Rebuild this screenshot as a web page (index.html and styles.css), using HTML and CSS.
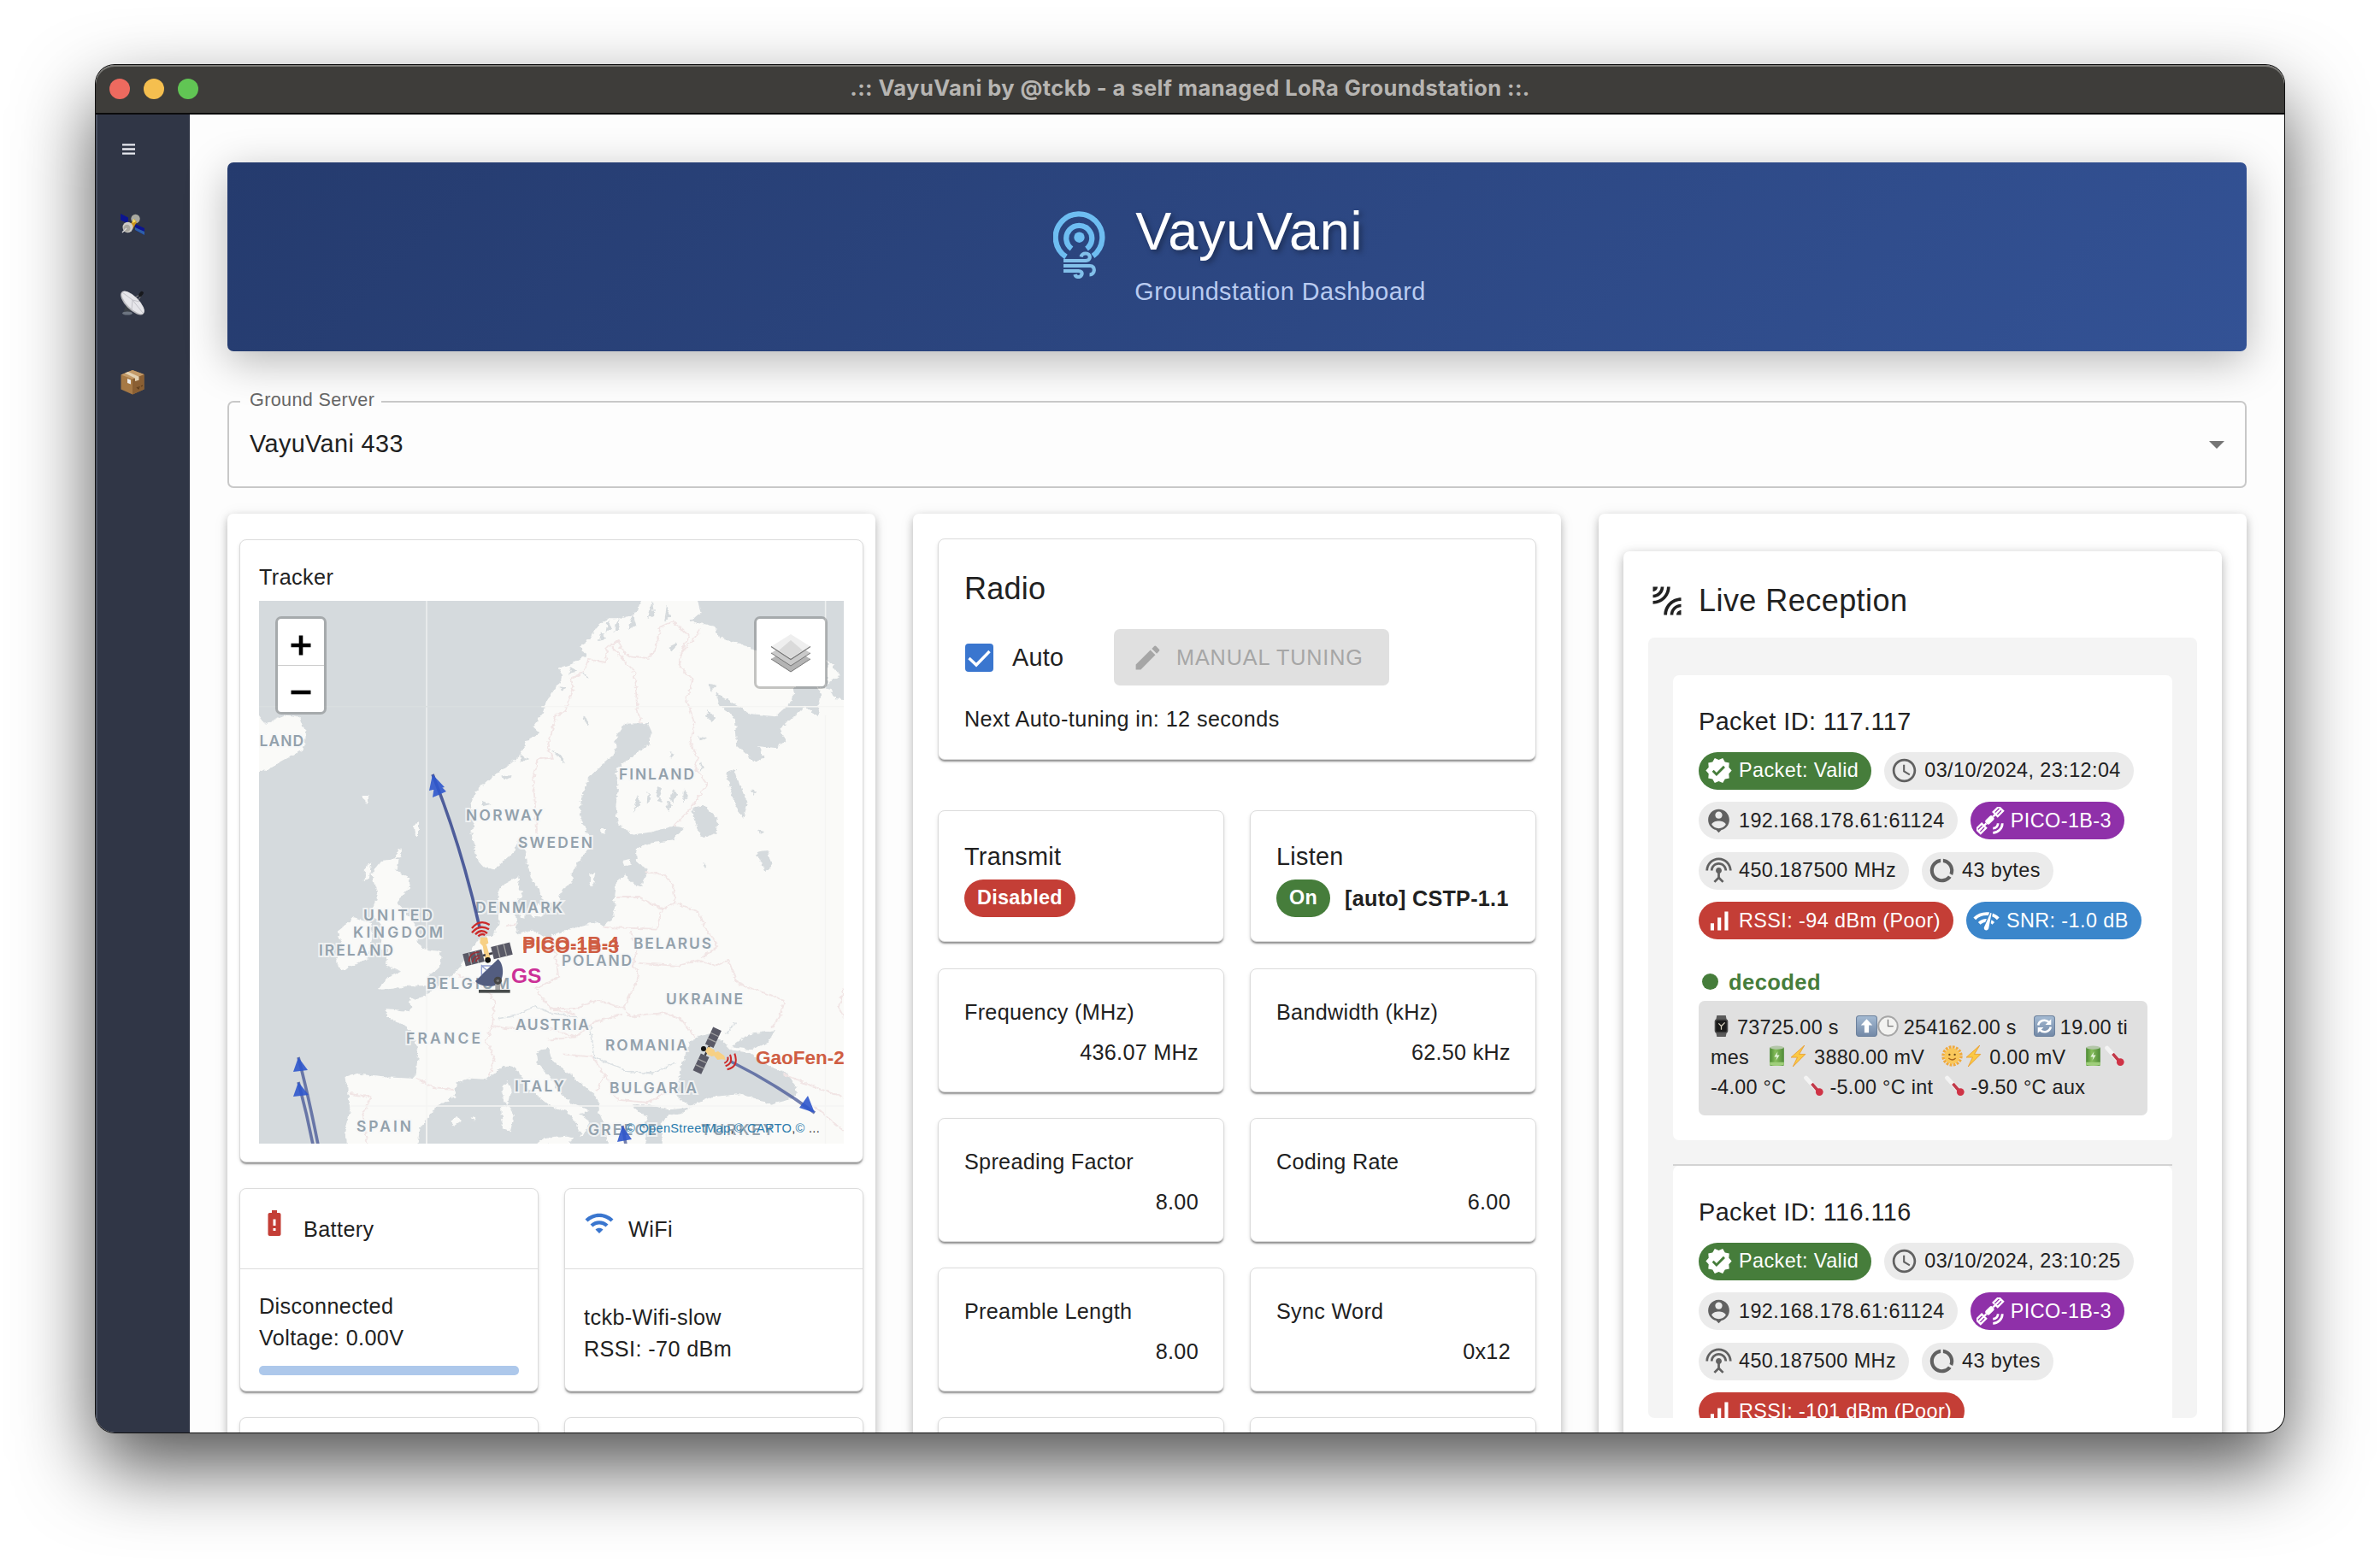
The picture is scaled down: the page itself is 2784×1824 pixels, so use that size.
FILE: index.html
```html
<!DOCTYPE html>
<html lang="en">
<head>
<meta charset="utf-8">
<title>VayuVani Groundstation Dashboard</title>
<link rel="stylesheet" href="styles.css">
</head>
<body>
<svg class="defs" width="0" height="0" aria-hidden="true">
  <symbol id="i-verified" viewBox="0 0 24 24"><path d="m23 12-2.44-2.79.34-3.69-3.61-.82-1.89-3.2L12 2.96 8.6 1.5 6.71 4.69 3.1 5.5l.34 3.7L1 12l2.44 2.79-.34 3.7 3.61.82L8.6 22.5l3.4-1.47 3.4 1.46 1.89-3.19 3.61-.82-.34-3.69zm-12.91 4.72-3.8-3.81 1.48-1.48 2.32 2.33 5.85-5.87 1.48 1.48z"/></symbol>
  <symbol id="i-clock" viewBox="0 0 24 24"><path d="M11.99 2C6.47 2 2 6.48 2 12s4.47 10 9.99 10C17.52 22 22 17.52 22 12S17.52 2 11.99 2M12 20c-4.42 0-8-3.58-8-8s3.58-8 8-8 8 3.58 8 8-3.58 8-8 8m.5-13H11v6l5.25 3.15.75-1.23-4.5-2.67z"/></symbol>
  <symbol id="i-person" viewBox="0 0 24 24"><path d="M12 2c-4.97 0-9 4.03-9 9 0 4.17 2.84 7.67 6.69 8.69L12 22l2.31-2.31C18.16 18.67 21 15.17 21 11c0-4.97-4.03-9-9-9m0 2c1.66 0 3 1.34 3 3s-1.34 3-3 3-3-1.34-3-3 1.34-3 3-3m0 14.3c-2.5 0-4.71-1.28-6-3.22.03-1.99 4-3.08 6-3.08s5.97 1.09 6 3.08c-1.29 1.94-3.5 3.22-6 3.22"/></symbol>
  <symbol id="i-sat" viewBox="0 0 24 24"><g transform="rotate(45 11 11)"><rect x="9" y="7" width="4.6" height="8" rx="1.5"/><g fill="none" stroke="currentColor" stroke-width="1.7"><path d="M11.3 7V4.5M11.3 17.5V15M8.7-2.500h5.200v6.500H8.700zM8.700 18h5.200v6.500H8.700zM11.300-2v6M11.300 18v6"/></g></g><g fill="none" stroke="currentColor" stroke-width="2"><path d="M14 18.300a4.300 4.300 0 0 0 4.300-4.300M14 22a8 8 0 0 0 8-8"/></g></symbol>
  <symbol id="i-antenna" viewBox="0 0 24 24"><path d="M12 5c-3.87 0-7 3.13-7 7h2c0-2.76 2.24-5 5-5s5 2.24 5 5h2c0-3.87-3.13-7-7-7m1 9.290c.88-.39 1.500-1.260 1.500-2.290 0-1.380-1.120-2.500-2.500-2.500S9.500 10.620 9.500 12c0 1.020.62 1.900 1.500 2.290v3.300L7.590 21 9 22.410l3-3 3 3L16.410 21 13 17.590zM12 1C5.930 1 1 5.930 1 12h2c0-4.970 4.030-9 9-9s9 4.030 9 9h2c0-6.070-4.930-11-11-11"/></symbol>
  <symbol id="i-usage" viewBox="0 0 24 24"><path d="M13 2.050v3.030c3.390.49 6 3.390 6 6.920 0 .9-.18 1.750-.48 2.540l2.600 1.530c.56-1.240.88-2.620.88-4.070 0-5.180-3.950-9.450-9-9.950M12 19c-3.870 0-7-3.130-7-7 0-3.530 2.610-6.430 6-6.920V2.050c-5.060.5-9 4.760-9 9.950 0 5.520 4.470 10 9.990 10 3.310 0 6.240-1.610 8.060-4.090l-2.600-1.530C16.170 17.980 14.210 19 12 19"/></symbol>
  <symbol id="i-signal" viewBox="0 0 24 24"><path d="M17 4h3v16h-3zM5 14h3v6H5zm6-5h3v11h-3z"/></symbol>
  <symbol id="i-netcheck" viewBox="0 0 24 24"><path d="M15.900 5c-.17 0-.32.09-.41.23l-.07.15-5.180 11.650c-.16.29-.26.61-.26.96 0 1.110.9 2.010 2.010 2.010.96 0 1.770-.68 1.960-1.590l.01-.03L16.400 5.500c0-.28-.22-.5-.5-.5M1 9l2 2c2.880-2.880 6.790-4.080 10.530-3.620l1.190-2.680C9.890 3.840 4.740 5.270 1 9m20 2 2-2c-1.640-1.640-3.550-2.820-5.590-3.570l-.53 2.820c1.500.62 2.900 1.530 4.120 2.750m-4 4 2-2c-.8-.8-1.700-1.420-2.660-1.890l-.55 2.920c.42.27.83.59 1.210.97M5 13l2 2c1.130-1.130 2.560-1.790 4.030-2l1.280-2.880c-2.630-.08-5.300.87-7.310 2.880"/></symbol>

  <linearGradient id="g-key" x1="0" y1="0" x2="0" y2="1"><stop offset="0" stop-color="#a5bbd3"/><stop offset="1" stop-color="#7288a6"/></linearGradient>
  <linearGradient id="g-bat" x1="0" x2="1" y1="0" y2="0"><stop offset="0" stop-color="#4b8a32"/><stop offset=".4" stop-color="#86bd5c"/><stop offset="1" stop-color="#4f8a37"/></linearGradient>
  <symbol id="e-watch" viewBox="0 0 24 24"><path d="M7 0h10l1 5H6zM6 19h12l-1 5H7z" fill="#5b5b5b"/><rect x="4.500" y="4" width="15" height="16" rx="3" fill="#4a4a4a"/><rect x="6" y="5.500" width="12" height="13" rx="1.500" fill="#1b1b1b"/><path d="M9 9l3 3 4-4M12 12v4" stroke="#d8d2c0" stroke-width="1.200" fill="none"/></symbol>
  <symbol id="e-up" viewBox="0 0 24 24"><rect x=".5" y=".5" width="23" height="23" rx="3" fill="url(#g-key)" stroke="#6c819d"/><path d="M12 4l6.500 7H14.500v8.500h-5V11H5.500z" fill="#fff"/></symbol>
  <symbol id="e-clock" viewBox="0 0 24 24"><circle cx="12" cy="12" r="10.800" fill="#f3f3f1" stroke="#a6a6a6" stroke-width="1.800"/><path d="M12 4.500V12h6" stroke="#777" stroke-width="1.200" fill="none"/></symbol>
  <symbol id="e-sync" viewBox="0 0 24 24"><rect x=".5" y=".5" width="23" height="23" rx="3" fill="url(#g-key)" stroke="#6c819d"/><path d="M5 11a7 6.500 0 0 1 12-3.500M19 13a7 6.500 0 0 1-12 3.500" stroke="#fff" stroke-width="2.400" fill="none"/><path d="M19.500 4v6.500h-6.500zM4.500 20v-6.500H11z" fill="#fff"/></symbol>
  <symbol id="e-battery" viewBox="0 0 24 24"><rect x="4" y="2" width="16" height="21" rx="1.500" fill="url(#g-bat)"/><ellipse cx="12" cy="2.500" rx="8" ry="2" fill="#b4c7a9"/><path d="M4 19h16v3q-8 2-16 0z" fill="#9fce7b"/><path d="M13 7l-4 6h3l-1 4 4-6h-3z" fill="#e7f4df"/></symbol>
  <symbol id="e-bolt" viewBox="0 0 24 24"><path d="M19 0L4 13.500h7L6 24l14-14h-7z" fill="#fbc944" stroke="#e89a2b" stroke-width=".8"/></symbol>
  <symbol id="e-sun" viewBox="0 0 24 24"><circle cx="12" cy="12" r="10" fill="none" stroke="#f0a93c" stroke-width="3.400" stroke-dasharray="2.600 1.330"/><circle cx="12" cy="12" r="8.800" fill="#f9c75a"/><circle cx="9" cy="10.500" r="1.100" fill="#6d4b1a"/><circle cx="15" cy="10.500" r="1.100" fill="#6d4b1a"/><path d="M8 14.500q4 3.500 8 0" stroke="#a9661c" stroke-width="1.300" fill="none"/></symbol>
  <symbol id="e-thermo" viewBox="0 0 24 24"><path d="M3.500 3L16 16.500" stroke="#f4f4f4" stroke-width="4.800" stroke-linecap="round"/><path d="M10 9.500L17 17.500" stroke="#c23a4a" stroke-width="3.400"/><circle cx="18.500" cy="18.800" r="4.200" fill="#cf3346"/></symbol>
</svg>

<div class="window">
  <header class="titlebar">
    <div class="lights"><i class="light red"></i><i class="light yellow"></i><i class="light green"></i></div>
    <div class="window-title">.:: VayuVani by @tckb - a self managed LoRa Groundstation ::.</div>
  </header>
  <div class="app">
    <nav class="sidebar">
      <svg class="burger" viewBox="0 0 15 13"><path d="M0 1.300h15M0 6.500h15M0 11.700h15" stroke="#e8eaf0" stroke-width="2.300"/></svg>
      <svg class="nav-icon nav-sat" viewBox="0 0 30 30"><path d="M1 3l9 4.500v7L1 10.500zM18 15l11 5v8l-11-6z" fill="#0c1590"/><path d="M18 19l11 5v4l-11-6z" fill="#2d5fa8"/><circle cx="18.500" cy="9" r="5.200" fill="#a8a8a0"/><path d="M12 16l5-7 3 4-5 8z" fill="#c9941f"/><path d="M16 9l3 3-4 2z" fill="#f7e36a"/><ellipse cx="9.500" cy="19" rx="6" ry="6.200" fill="#cfcdc6"/><ellipse cx="8.500" cy="20" rx="4" ry="4.300" fill="#a9a79f"/><path d="M8 20l-5 5" stroke="#ddd" stroke-width="1.200"/></svg>
      <svg class="nav-icon nav-dish" viewBox="0 0 30 30"><path d="M8 17l-4 10h10l-4-10z" fill="#3b4047"/><ellipse cx="9" cy="27.500" rx="6" ry="2" fill="#6c7480"/><path d="M16 10l9-5M20 14l6-8" stroke="#888" stroke-width="1"/><rect x="23" y="1.500" width="4" height="7" rx="2" transform="rotate(38 25 5)" fill="#17191d"/><ellipse cx="15" cy="15.500" rx="18" ry="7.800" transform="rotate(45 15 15.500)" fill="#b9b9bd"/><ellipse cx="15.500" cy="15" rx="17.300" ry="6.600" transform="rotate(45 15.500 15)" fill="#e6e6ea"/><path d="M3 3l12 9 12 15M15 12l-1 11M15 12l8 2" stroke="#c2c2c8" stroke-width="1" fill="none"/></svg>
      <svg class="nav-icon nav-box" viewBox="0 0 30 30"><path d="M1.500 6.500L15 1l13.500 5v17.500L15 29.500 1.500 23.500z" fill="#a67945"/><path d="M15 11.500l13.500-5.500v17.500L15 29.500z" fill="#8a5f33"/><path d="M1.500 6.500L15 1l13.500 5L15 11.500z" fill="#c39a68"/><path d="M6 4.500L10 3l12.500 5.700v4L18 14v-3.500z" fill="#e3d2b4"/><path d="M9 11l4 1.500v5L9 16z" fill="#eee"/><path d="M20 21l2 2 1-3M25 20l2-1" stroke="#5d3d1c" stroke-width="1.200" fill="none"/></svg>
    </nav>
    <main class="content">
      <section class="banner">
        <svg class="logo" viewBox="0 0 61 79">
          <g fill="none" stroke="#6ebdf1" stroke-width="6.300"><path d="M15 53.500A27.300 27.300 0 1 1 46.500 52.500"/><path d="M21.500 44A15 15 0 1 1 39 44"/></g>
          <circle cx="30.500" cy="30.700" r="6.200" fill="#6ebdf1"/>
          <g fill="none" stroke="#82c0ea" stroke-width="4.200"><path d="M12 58h25.500c7.500 0 6.500-8.500.5-8.500q-4.500 0-5.500 4M12 64h31c7 0 6 10.500-.5 10.500M12 70h17.500c6.500 0 4.500 7.500-.5 7q-3-.3-3.500-3"/></g>
        </svg>
        <div><h1>VayuVani</h1><p>Groundstation Dashboard</p></div>
      </section>

      <fieldset class="select"><legend>Ground Server</legend><div class="select-row"><span>VayuVani 433</span><i class="caret"></i></div></fieldset>

      <div class="columns">
        <section class="col col-status">
          <article class="card tracker">
            <h3>Tracker</h3>
            <div class="map">
              <svg class="map-base" viewBox="86 339 1375 1905" preserveAspectRatio="none">
                <filter id="coast" x="0" y="0" width="1" height="1"><feTurbulence type="fractalNoise" baseFrequency="0.07" numOctaves="3" seed="4"/><feDisplacementMap in="SourceGraphic" scale="14" xChannelSelector="R" yChannelSelector="G"/></filter>
                <rect x="86" y="339" width="1375" height="1905" fill="#d5dadd"/>
                <g stroke="#eef0f0" stroke-width="1.500"><path d="M480 339V2244M1418 339V2244" vector-effect="non-scaling-stroke"/></g>
                <path d="M86 710H1461" stroke="#d9dedf" stroke-width="1.500" vector-effect="non-scaling-stroke"/>
                <g filter="url(#coast)">
                  <g fill="#fafaf8">
                    <path d="M990 300L975 380 940 400 905 400 880 430 865 470 840 500 855 530 820 560 790 575 800 600 785 640 765 690 750 740 730 780 745 800 710 840 700 880 660 930 625 970 595 1010 583 1060 595 1100 585 1150 590 1195 600 1250 615 1275 640 1282 670 1240 690 1210 700 1170 712 1220 715 1260 725 1310 745 1350 755 1400 790 1395 800 1350 820 1330 825 1280 850 1230 868 1190 860 1165 850 1130 840 1080 845 1020 862 960 890 920 925 870 925 820 945 770 1000 768 1010 800 1005 840 960 890 925 930 930 1000 925 1060 930 1120 965 1160 1010 1150 1060 1130 1085 1135 1060 1180 1000 1190 972 1210 975 1260 1000 1280 985 1340 965 1335 945 1300 925 1330 920 1380 925 1420 918 1455 895 1480 880 1465 820 1490 780 1510 765 1525 735 1495 715 1500 695 1510 690 1450 690 1400 705 1370 695 1340 698 1306 655 1340 648 1370 652 1420 650 1470 640 1510 600 1530 575 1590 550 1640 500 1700 485 1720 450 1740 440 1730 443 1780 385 1770 385 1800 430 1830 455 1880 460 1930 455 2000 445 2015 370 2010 315 1998 290 2010 295 2060 300 2120 290 2200 295 2280 455 2280 465 2190 500 2120 545 2080 550 2030 580 2015 620 2018 660 1970 690 1980 720 2050 770 2110 810 2130 835 2180 845 2220 865 2170 840 2140 865 2130 820 2100 790 2060 770 2010 740 1960 738 1930 765 1905 775 1950 800 1980 850 2040 885 2090 885 2130 900 2190 910 2280 1000 2280 990 2180 1000 2150 960 2110 1000 2110 1040 2120 1060 2130 1030 2170 1040 2280 1500 2280 1500 690 1440 685 1430 650 1395 640 1408 660 1400 745 1370 710 1310 790 1325 830 1300 855 1260 850 1275 890 1255 905 1210 850 1205 750 1165 700 1160 660 1240 735 1300 745 1340 690 1345 640 1330 570 1250 510 1220 490 1170 470 1160 430 1100 410 1125 380 1110 300z"/>
                    <path d="M1422 545L1452 600 1422 630z"/>
                    <path d="M375 1250L415 1245 410 1290 440 1310 440 1340 410 1400 430 1430 455 1480 460 1540 470 1560 515 1570 510 1620 480 1660 490 1690 440 1690 400 1700 365 1705 390 1660 420 1640 385 1620 390 1560 370 1560 375 1480 350 1430 365 1370 350 1300z"/>
                    <path d="M270 1500L310 1450 350 1470 350 1520 340 1600 280 1635 265 1600 285 1560z"/>
                    <path d="M60 740L86 740 100 770 150 740 180 745 195 800 190 860 140 900 105 930 86 940 60 940z"/>
                    <path d="M660 2040l10-15 8 30-8 55-10-20zM655 2115l20-5 10 30-8 60-18-10zM740 2244l15-20 55-8 15 5-10 30zM535 2165l20-15 5 15-15 15zM585 2150l10 5-3 10zM720 1420l25-20 10 40-25 15zM700 1435l12 0 0 20-12-5zM865 1300l12-8-6 50-8-5zM330 1020l15 0-5 30-8-10zM452 1130l8-18 0 50-6 5zM940 1250l18-5 2 20-15 5zM890 1140l12 0 0 15-10 3zM335 1275l15-20-5 60-10 5zM410 1215l12-5-4 30-8 0z"/>
                  </g>
                  <g fill="#d5dadd">
                    <path d="M1100 1880L1140 1860 1175 1885 1195 1915 1240 1925 1270 1960 1330 2000 1350 2050 1345 2085 1290 2105 1220 2070 1150 2080 1100 2112 1068 2080 1070 2040 1082 1960zM1195 1905L1235 1862 1300 1845 1282 1890 1245 1915zM1050 2125l50-8-20 20-35 8z"/>
                    <path d="M1105 1070l25-15 35 50-5 50-30 15-15-40zM1185 940l20-10 10 50 20 70-10 50-20-40zM1050 870l15 5-10 15zM1140 720l20 30-10 15-12-20zM1050 500l20-15-15 35zM1120 815l18 5-18 12zM1145 630l15 5-12 25zM1255 1220l25-5 15 50-18 25zM1130 1260l8 5-5 10zM845 740l10 10 8 25-8-5zM1260 1140l12 10-8 10zM1020 990l15 8-8 30 12 20-16-6zM1060 1000l10 20-12 30-4-20zM975 1020l8 25-15 35zM840 580l20 25-3 5z"/>
                    <path d="M905 405l10 30-14 20zM930 400l5 40-14 10zM965 380l8 45-18 15zM1010 340l6 50-16 12zM1045 350l8 45-14 20zM890 450l16 20-20 10zM820 570l14 14-20 16zM795 640l16 6-14 10zM700 880l20 14-18 12zM655 955l26-4-12 14zM608 1040l24 12-20 8zM1000 1010l10 24-12 18zM1085 1000l8 24-10 22zM1045 1040l12 16-10 22zM1125 905l6 20-8 10zM1245 1000l8 12-6 14zM775 865l22 16 10 34-16-24z"/>
                  </g>
                  <g fill="none" stroke="#f1e5e5" stroke-width="1.800">
                    <path vector-effect="non-scaling-stroke" d="M740 1160L735 1050 730 960 740 895 775 890 765 850 785 740 805 730 825 650 820 610 850 590 860 545 900 555 905 500 930 480 950 530 1000 540 1020 510 1030 430 1060 410 1095 460 1080 520 1075 570 1108 620 1090 680 1110 770 1100 840 1118 890 1110 920 1140 980 1100 1070 1060 1130M915 500L970 590 975 720 985 768M1125 440L1110 470 1080 520"/>
                    <path vector-effect="non-scaling-stroke" d="M990 1290L1040 1300 1060 1345 1065 1400 1120 1430 1140 1500 1165 1550 1130 1590M925 1380L980 1380 1035 1420 1020 1490 895 1485M1065 1400L1035 1420M960 1500L975 1570 965 1610 980 1660 955 1730 945 1770 880 1740 830 1770 780 1770M975 1610L1070 1620 1120 1600 1160 1620 1190 1600 1210 1680 1320 1740 1310 1800 1290 1840M780 1540L790 1660 735 1700 770 1770 830 1790M945 1770L960 1800 1000 1790 1040 1785 1080 1810 1110 1870M550 1650L610 1690 640 1740 635 1830 670 1840 760 1835 830 1870 870 1820 940 1790M635 1830L620 1880 640 1950 625 2010M455 2015L500 2050 545 2055M300 2070L350 2080 330 2140 340 2244M765 1880L830 1870M800 1930L870 1940 900 2000 880 2060M900 2000L930 2090 1000 2100 1050 2060M1320 2000L1400 2050 1461 2080M1390 2110L1461 2200M1461 1700L1450 1770 1461 1800M665 1480L690 1475"/>
                  </g>
                  <g fill="none" stroke="#dbe0e3" stroke-width="1.500"><path vector-effect="non-scaling-stroke" d="M650 1805L690 1795 735 1760 770 1785 835 1800M865 1830L875 1940 950 1990 1010 1998 1065 1960M1185 1860L1205 1820"/></g>
                </g>
                <path d="M480 1720V2244M1418 740V2244M750 710H1461M300 2112H1461" stroke="#f5f5f3" stroke-width="1.500" vector-effect="non-scaling-stroke"/>
              </svg>
              <svg class="map-over" viewBox="0 0 684 635">
                <g class="country">
                  <text x="-31" y="170" textLength="83">ICELAND</text>
                  <text x="421" y="209" textLength="88">FINLAND</text>
                  <text x="242" y="257" textLength="90">NORWAY</text>
                  <text x="303" y="289" textLength="87">SWEDEN</text>
                  <text x="253" y="365" textLength="102">DENMARK</text>
                  <text x="122" y="374" textLength="81">UNITED</text>
                  <text x="110" y="394" textLength="105">KINGDOM</text>
                  <text x="70" y="415" textLength="87">IRELAND</text>
                  <text x="438" y="407" textLength="91">BELARUS</text>
                  <text x="354" y="427" textLength="82">POLAND</text>
                  <text x="196" y="454" textLength="97">BELGIUM</text>
                  <text x="476" y="472" textLength="90">UKRAINE</text>
                  <text x="300" y="502" textLength="86">AUSTRIA</text>
                  <text x="172" y="518" textLength="87">FRANCE</text>
                  <text x="405" y="526" textLength="96">ROMANIA</text>
                  <text x="299" y="574" textLength="58">ITALY</text>
                  <text x="410" y="576" textLength="102">BULGARIA</text>
                  <text x="114" y="621" textLength="64">SPAIN</text>
                  <text x="385" y="625" textLength="80">GREECE</text>
                  <text x="517" y="625" textLength="85">TURKEY</text>
                </g>
                <g fill="none" stroke="#3f4f92" stroke-opacity=".72" stroke-width="3.600">
                  <path stroke-opacity=".9" d="M203 203Q236 285 258 382"/><path d="M46 534Q58 580 69 636M46 563Q56 600 63 636M552 539Q604 565 650 599M425 614L429 636"/>
                </g>
                <path fill="#2f57cc" fill-opacity=".9" d="M203 203L199 222 217 218zM206 210L203 230 219 223zM46 534L40 551 57 549zM46 563L40 580 58 578zM650 599L632 593 642 579zM425 614L419 633 436 630z"/>
                <g transform="translate(227 347) scale(.3333)">
                  <g fill="none" stroke="#cc2a2a" stroke-width="7"><path d="M66 108q28-34 62-12M66 124q26-32 60-12M78 130q20-22 42-4M88 136q12-12 24-4"/></g>
                  <path d="M96 140l24 0 4 20-10 8 16 40-18 8-8-46-10-10z" fill="#f7d084"/>
                  <g transform="rotate(-14 120 198)"><path d="M36 178h68v44H36zM138 178h68v44h-68z" fill="#595966"/><path d="M58 178v44M82 178v44M160 178v44M184 178v44" stroke="#a3a3a3" stroke-width="4"/><path d="M104 200h34" stroke="#3c3c44" stroke-width="8"/></g>
                  <path d="M108 168l10 0 12 44-14 4z" fill="#f7d084"/>
                  <circle cx="122" cy="220" r="10" fill="#111"/>
                  <g fill="none" stroke="#9a3036" stroke-width="5"><path d="M56 226q0-34 36-34M68 228q2-24 26-24M80 226q2-12 14-14"/></g>
                  <path d="M100 236l0 46M100 240l36 30M136 240l-36 34M100 240h40" stroke="#8e9ccf" stroke-width="4"/>
                  <path d="M158 216C184 240 178 300 150 308 125 316 90 310 78 294z" fill="#535d80"/>
                  <path d="M148 292h17v34h-17z" fill="#a5a5a5"/><circle cx="157" cy="292" r="14" fill="#464646"/><circle cx="157" cy="292" r="5" fill="#777"/>
                  <rect x="90" y="324" width="110" height="11" fill="#484c4c"/>
                  <g transform="rotate(25 893 535)"><path d="M877 454h32v66h-32zM877 556h32v66h-32z" fill="#595966"/><path d="M877 476h32M877 498h32M877 578h32M877 600h32" stroke="#a3a3a3" stroke-width="4"/><path d="M893 520v36" stroke="#3c3c44" stroke-width="7"/></g>
                  <path d="M884 538l12-14 20 10 4 10 10-4 22 16 4 14-14-2-14 2-12-14-8 2-14-6z" fill="#f7d084"/>
                  <circle cx="879" cy="531" r="9" fill="#111"/>
                  <g fill="none" stroke="#cc2a2a" stroke-width="6"><path d="M952 582q16-8 12-22M956 592q28-10 16-40M962 604q42-10 26-56"/></g>
                </g>
                <g class="marker"><text x="308" y="408" textLength="113">PICO-1B-4</text><text x="308" y="411.500" textLength="113">PICO-1B-3</text><text x="581" y="542">GaoFen-2</text><text class="gs" x="295" y="447">GS</text></g>
              </svg>
              <div class="zoom"><svg viewBox="0 0 54 54"><path d="M15.500 31h23M27 19.500v23" stroke="#000" stroke-width="4.600"/></svg><svg viewBox="0 0 54 54"><path d="M15.500 31h23" stroke="#000" stroke-width="4.600"/></svg></div>
              <div class="layers"><svg viewBox="0 0 48 46"><path d="M24 16L47 30 24 45 1 30z" fill="#b4b4b4"/><path d="M1 30L24 45 47 30" stroke="#777" fill="none"/><path d="M24 9L47 23 24 38 1 23z" fill="#cacaca"/><path d="M1 23L24 38 47 23" stroke="#777" fill="none"/><path d="M24 1L47 15.500 24 30 1 15.500z" fill="#efefef"/><path d="M24 8L38 20 24 29 10 20z" fill="#dadada"/><path d="M1 15.500L24 30.500 47 15.500" stroke="#777" fill="none" stroke-width="1.200"/></svg></div>
              <div class="attribution">© OpenStreetMap<b>,</b>© CARTO<b>,</b>© <b>...</b></div>
            </div>
          </article>
          <div class="pair">
            <article class="card mini"><header><svg class="bat" viewBox="0 0 24 24"><path d="M15.670 4H14V2h-4v2H8.330C7.600 4 7 4.600 7 5.330v15.330C7 21.400 7.600 22 8.330 22h7.330c.74 0 1.340-.6 1.340-1.330V5.330C17 4.600 16.400 4 15.670 4M13 18h-2v-2h2zm0-4h-2V9h2z"/></svg>Battery</header><div class="mini-body">Disconnected<br>Voltage: 0.00V<div class="bar"></div></div></article>
            <article class="card mini"><header><svg class="wifi" viewBox="0 0 24 24"><path d="M1 9l2 2c4.970-4.970 13.030-4.970 18 0l2-2C16.930 2.930 7.080 2.930 1 9m8 8 3 3 3-3c-1.650-1.660-4.340-1.660-6 0m-4-4 2 2c2.760-2.760 7.240-2.760 10 0l2-2C15.140 9.140 8.870 9.140 5 13"/></svg>WiFi</header><div class="mini-body low">tckb-Wifi-slow<br>RSSI: -70 dBm</div></article>
            <article class="card mini"></article>
            <article class="card mini"></article>
          </div>
        </section>

        <section class="col col-radio">
          <article class="card radio">
            <h2>Radio</h2>
            <div class="radio-row">
              <svg class="check" viewBox="0 0 33 33"><rect width="33" height="33" rx="4" fill="#3a76cf"/><path d="M4.500 17l8.500 8L28.500 9" fill="none" stroke="#fff" stroke-width="3.400"/></svg>
              <span class="auto">Auto</span>
              <button class="tune" disabled><svg viewBox="0 0 24 24"><path d="M3 17.250V21h3.750L17.810 9.940l-3.750-3.750zM20.710 7.040c.39-.39.39-1.020 0-1.410l-2.340-2.340a.996.996 0 0 0-1.410 0l-1.830 1.830 3.750 3.750z"/></svg>MANUAL TUNING</button>
            </div>
            <p>Next Auto-tuning in: 12 seconds</p>
          </article>
          <div class="params">
            <article class="card mode"><h4>Transmit</h4><div class="mode-row"><span class="pill off">Disabled</span></div></article>
            <article class="card mode"><h4>Listen</h4><div class="mode-row"><span class="pill on">On</span><b>[auto] CSTP-1.1</b></div></article>
            <article class="card param"><span>Frequency (MHz)</span><span class="val">436.07 MHz</span></article>
            <article class="card param"><span>Bandwidth (kHz)</span><span class="val">62.50 kHz</span></article>
            <article class="card param"><span>Spreading Factor</span><span class="val">8.00</span></article>
            <article class="card param"><span>Coding Rate</span><span class="val">6.00</span></article>
            <article class="card param"><span>Preamble Length</span><span class="val">8.00</span></article>
            <article class="card param"><span>Sync Word</span><span class="val">0x12</span></article>
            <article class="card param"></article>
            <article class="card param"></article>
          </div>
        </section>

        <section class="col col-live">
          <div class="live">
            <h2><svg viewBox="0 0 24 24"><path d="M6 3H3v3c1.660 0 3-1.340 3-3m8 0h-2c0 4.970-4.030 9-9 9v2c6.080 0 11-4.930 11-11m-4 0H8c0 2.760-2.240 5-5 5v2c3.870 0 7-3.130 7-7m0 18h2c0-4.970 4.030-9 9-9v-2c-6.070 0-11 4.930-11 11m8 0h3v-3c-1.660 0-3 1.340-3 3m-4 0h2c0-2.760 2.240-5 5-5v-2c-3.870 0-7 3.130-7 7"/></svg>Live Reception</h2>
            <div class="feed">
              <article class="packet">
                <h3>Packet ID: 117.117</h3>
                <div class="chips">
                  <span class="chip green"><svg><use href="#i-verified"/></svg>Packet: Valid</span>
                  <span class="chip"><svg><use href="#i-clock"/></svg>03/10/2024, 23:12:04</span>
                  <span class="chip"><svg><use href="#i-person"/></svg>192.168.178.61:61124</span>
                  <span class="chip purple"><svg><use href="#i-sat"/></svg>PICO-1B-3</span>
                  <span class="chip"><svg><use href="#i-antenna"/></svg>450.187500 MHz</span>
                  <span class="chip"><svg><use href="#i-usage"/></svg>43 bytes</span>
                  <span class="chip red"><svg><use href="#i-signal"/></svg>RSSI: -94 dBm (Poor)</span>
                  <span class="chip blue"><svg><use href="#i-netcheck"/></svg>SNR: -1.0 dB</span>
                </div>
                <div class="decoded"><i></i>decoded</div>
                <div class="telemetry">
                  <div class="line"><span><svg><use href="#e-watch"/></svg><em>73725.00 s</em></span><span><svg><use href="#e-up"/></svg><svg><use href="#e-clock"/></svg><em>254162.00 s</em></span><span><svg><use href="#e-sync"/></svg><em>19.00 ti</em></span></div>
                  <div class="line"><span>mes</span><span><svg><use href="#e-battery"/></svg><svg><use href="#e-bolt"/></svg><em>3880.00 mV</em></span><span><svg><use href="#e-sun"/></svg><svg><use href="#e-bolt"/></svg><em>0.00 mV</em></span><span><svg><use href="#e-battery"/></svg><svg><use href="#e-thermo"/></svg></span></div>
                  <div class="line"><span>-4.00 °C</span><span><svg><use href="#e-thermo"/></svg><em>-5.00 °C int</em></span><span class="near"><svg><use href="#e-thermo"/></svg><em>-9.50 °C aux</em></span></div>
                </div>
              </article>
              <hr>
              <article class="packet">
                <h3>Packet ID: 116.116</h3>
                <div class="chips">
                  <span class="chip green"><svg><use href="#i-verified"/></svg>Packet: Valid</span>
                  <span class="chip"><svg><use href="#i-clock"/></svg>03/10/2024, 23:10:25</span>
                  <span class="chip"><svg><use href="#i-person"/></svg>192.168.178.61:61124</span>
                  <span class="chip purple"><svg><use href="#i-sat"/></svg>PICO-1B-3</span>
                  <span class="chip"><svg><use href="#i-antenna"/></svg>450.187500 MHz</span>
                  <span class="chip"><svg><use href="#i-usage"/></svg>43 bytes</span>
                  <span class="chip red"><svg><use href="#i-signal"/></svg>RSSI: -101 dBm (Poor)</span>
                </div>
              </article>
            </div>
          </div>
        </section>
      </div>
    </main>
  </div>
</div>
</body>
</html>
```
FILE: styles.css
```css
* { box-sizing: border-box; margin: 0; padding: 0; }
html, body { height: 100%; overflow: hidden; }
body { background: #fff; padding: 76px 112px 0; font: 25.2px/36px "Liberation Sans", Arial, sans-serif; letter-spacing: .01071em; color: #212121; }
svg { display: block; fill: currentColor; flex: none; }
.defs { position: absolute; }
h1, h2, h3, h4 { font-weight: 400; }

.window { width: 2560px; height: 1600px; border-radius: 22px; overflow: hidden; display: flex; flex-direction: column; background: #fdfdfd; box-shadow: 0 0 0 1px #111, 0 40px 90px rgba(0, 0, 0, .68); }
.titlebar { height: 58px; flex: none; background: #3e3d3a; border-bottom: 2px solid #0b0b0b; box-shadow: inset 0 2px 0 #7b7a76; border-radius: 22px 22px 0 0; display: grid; grid-template-columns: 1fr auto 1fr; align-items: center; padding: 0 16px; }
.lights { display: flex; gap: 16px; }
.light { width: 24px; height: 24px; border-radius: 50%; }
.light.red { background: #ed6a5f; }
.light.yellow { background: #f5bf4f; }
.light.green { background: #61c554; }
.window-title { font: 700 25.5px/54px Inter, sans-serif; letter-spacing: .4px; color: #b7b5b2; white-space: nowrap; margin-top: -2px; }

.app { flex: 1; display: flex; min-height: 0; }
.sidebar { width: 110px; background: #303646; flex: none; padding: 34px 0 0 28px; box-shadow: inset 2px 0 0 #4a5060; }
.burger { width: 15px; height: 13px; margin-left: 3px; }
.nav-icon { width: 30px; height: 30px; }
.nav-sat { margin-top: 66px; }
.nav-dish { margin-top: 62px; }
.nav-box { margin-top: 63px; }
.content { flex: 1; min-width: 0; padding: 56px 44px 0; }

.banner { height: 221px; border-radius: 7px; background: linear-gradient(135deg, #253b6e, #335295); box-shadow: 0 12px 50px rgba(0, 0, 0, .28); display: flex; justify-content: center; gap: 35px; padding-left: 6px; }
.logo { width: 61px; height: 79px; margin-top: 57px; }
.banner h1 { font-size: 63px; line-height: 76px; margin-top: 42px; letter-spacing: .7px; color: #fff; text-shadow: 3px 3px 6px rgba(0, 0, 0, .35); }
.banner p { font-size: 28.8px; line-height: 50px; letter-spacing: .46px; color: #b9cbf0; margin-top: 8px; margin-left: -1px; }

.select { height: 113px; margin-top: 47px; border: 2px solid #c8c8c8; border-radius: 7px; padding: 0 24px; }
.select legend { font-size: 21.6px; line-height: 20px; letter-spacing: .35px; color: #666; padding: 0 8px 4px 11px; margin-left: -11px; }
.select-row { display: flex; justify-content: space-between; align-items: center; font-size: 28.8px; line-height: 74px; letter-spacing: .4px; }
.caret { border: 9px solid transparent; border-top-color: #757575; border-bottom: 0; margin-top: 3px; }

.columns { display: grid; grid-template-columns: repeat(3, 758px); gap: 44px; margin-top: 30px; }
.col { height: 1110px; border-radius: 7px; background: #fff; box-shadow: 0 4px 10px rgba(0, 0, 0, .24), 0 2px 18px rgba(0, 0, 0, .08); }
.col-status { padding: 30px 14px; }
.col-radio { padding: 29px; }
.col-live { padding: 44px 29px; }
.card { background: #fff; border: 1px solid #dcdcdc; border-radius: 8px; box-shadow: 0 3px 2px -1px rgba(0, 0, 0, .38), 0 2px 4px rgba(0, 0, 0, .1); }

.tracker { height: 729px; padding: 25px 22px; }
.tracker h3 { font-size: 25.2px; line-height: 36px; letter-spacing: .4px; }
.map { position: relative; width: 684px; height: 635px; margin-top: 10px; overflow: hidden; }
.map-base, .map-over { position: absolute; inset: 0; width: 684px; height: 635px; }
.country { font: 600 17.400px Inter, sans-serif; letter-spacing: 0; fill: #93a1ac; stroke: #f7f8f8; stroke-width: 4px; stroke-opacity: .8; paint-order: stroke; }
.marker { font: 700 22.5px "Liberation Sans", sans-serif; letter-spacing: 0; fill: #cf5d43; }
.marker .gs { font-size: 24.5px; fill: #cc3097; }
.zoom, .layers { position: absolute; top: 18px; border: 3px solid rgba(0, 0, 0, .22); background: #fff; background-clip: padding-box; border-radius: 7px; }
.zoom { left: 19px; width: 60px; height: 115px; }
.zoom svg { width: 54px; height: 54px; }
.zoom svg + svg { border-top: 1px solid #ccc; height: 55px; }
.layers { left: 579px; width: 86px; height: 85px; padding: 17px 0 0 16px; }
.layers svg { width: 48px; height: 46px; }
.attribution { position: absolute; left: 429px; top: 607px; font-size: 14.6px; line-height: 20px; letter-spacing: .3px; color: #2a7cae; white-space: nowrap; }
.attribution b { font-weight: 400; color: #333; }

.pair { display: grid; grid-template-columns: 350px 350px; column-gap: 30px; row-gap: 30px; margin-top: 30px; }
.mini { height: 238px; letter-spacing: .4px; }
.mini header { height: 94px; border-bottom: 1px solid #dcdcdc; display: flex; gap: 16px; padding: 29px 22px 0; }
.mini header svg { width: 36px; height: 36px; margin-top: -7px; }
.bat { color: #c43e36; }
.wifi { color: #3a76cf; }
.mini-body { padding: 25px 22px; line-height: 37px; }
.mini-body.low { padding-top: 38px; }
.bar { height: 11px; border-radius: 5px; background: #adc8eb; margin-top: 14px; }

.radio { height: 259px; padding: 29px 30px; }
.radio h2 { font-size: 36px; line-height: 58px; letter-spacing: .27px; }
.radio-row { display: flex; align-items: center; margin-top: 18px; padding-left: 1px; }
.check { width: 33px; height: 33px; }
.auto { font-size: 28.8px; margin-left: 22px; width: 119px; letter-spacing: .3px; }
.tune { width: 322px; height: 66px; border: 0; border-radius: 7px; background: #e0e0e0; color: #a6a6a6; font: 25.2px "Liberation Sans", sans-serif; letter-spacing: .9px; display: flex; align-items: center; padding-left: 21px; gap: 15px; white-space: nowrap; }
.tune svg { width: 37px; height: 37px; }
.radio p { margin-top: 21px; letter-spacing: .42px; }
.params { display: grid; grid-template-columns: 335px 335px; column-gap: 30px; row-gap: 31px; margin-top: 59px; }
.mode { height: 154px; padding: 32px 30px; }
.mode h4 { font-size: 28.8px; line-height: 43px; letter-spacing: .3px; }
.mode-row { display: flex; gap: 17px; align-items: center; margin-top: 5px; white-space: nowrap; }
.pill { height: 44px; border-radius: 22px; padding: 0 15px; font: 700 23.4px/42px "Liberation Sans", sans-serif; letter-spacing: .3px; color: #fff; }
.pill.off { background: #c43e36; }
.pill.on { background: #467d3b; }
.param { height: 145px; padding: 32px 29px 0 30px; display: flex; flex-direction: column; gap: 11px; margin-bottom: -1px; }
.param span { letter-spacing: .3px; }
.val { text-align: right; }

.live { height: 1100px; background: #fff; border-radius: 7px; padding: 29px; box-shadow: 0 4px 12px rgba(0, 0, 0, .24), 0 2px 18px rgba(0, 0, 0, .08); }
.live h2 { display: flex; align-items: center; gap: 15px; font-size: 36px; line-height: 58px; letter-spacing: .45px; }
.live h2 svg { width: 44px; height: 44px; }
.feed { height: 913px; margin-top: 14px; border-radius: 7px; background: #f4f4f4; padding: 44px 29px 0; overflow: hidden; }
.feed hr { border: 0; border-top: 2px solid #d3d3d3; margin-top: 28px; }
.packet { height: 544px; border-radius: 7px; background: #fff; padding: 29px 29px 29px 30px; }
.packet h3 { font-size: 28.8px; line-height: 51px; letter-spacing: .45px; }
.chips { display: flex; flex-wrap: wrap; gap: 14.600px 15px; margin-top: 10px; width: 524px; }
.chip { height: 43.800px; border-radius: 22px; background: #ebebeb; font-size: 23.4px; line-height: 43px; letter-spacing: .42px; padding: 0 15px 0 7px; display: flex; align-items: center; gap: 7px; white-space: nowrap; }
.chip svg { width: 33px; height: 33px; color: #616161; }
.chip.green, .chip.purple, .chip.red, .chip.blue { color: #fff; }
.chip.green svg, .chip.purple svg, .chip.red svg, .chip.blue svg { color: #fff; }
.green { background: #467d3b; }
.purple { background: #8f30a9; }
.red { background: #c43e36; }
.blue { background: #3b86cb; }
.decoded { display: flex; align-items: center; gap: 12px; font-weight: 700; font-size: 25.6px; letter-spacing: .4px; color: #467d3b; margin-top: 32px; padding-left: 4px; }
.decoded i { width: 19px; height: 19px; border-radius: 50%; background: #467d3b; }
.telemetry { height: 134px; margin-top: 4px; border-radius: 7px; background: #e0e0e0; padding: 14px; font-size: 23.4px; line-height: 35px; letter-spacing: .3px; white-space: nowrap; }
.line { display: flex; gap: 20px; height: 35px; }
.line span { display: flex; align-items: center; }
.line svg { width: 25px; height: 25px; margin-top: -3px; }
.line em { font-style: normal; margin-left: 6px; }
.line .near { margin-left: -7px; }
```
